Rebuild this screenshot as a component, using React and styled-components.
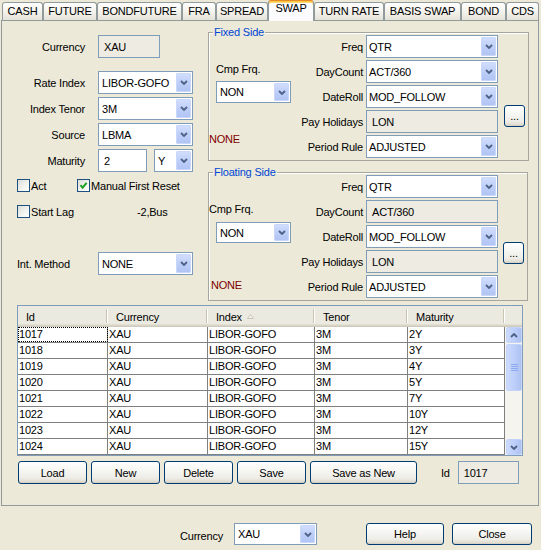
import React from 'react';
import styled, { createGlobalStyle, css } from 'styled-components';

const GlobalStyle = createGlobalStyle`
  html, body { margin: 0; padding: 0; background: #ECE9D8; }
  body {
    font-family: "Liberation Sans", Arial, sans-serif;
    font-size: 11px;
    letter-spacing: -0.2px;
    color: #000;
  }
  *, *::before, *::after { box-sizing: border-box; }
  button { font: inherit; letter-spacing: inherit; color: inherit; }
`;

const Window = styled.div`
  width: 541px;
  height: 550px;
  overflow: hidden;
  background: #ECE9D8;
  display: flex;
  flex-direction: column;
`;

/* ---------- tabs ---------- */
const TabBar = styled.div`
  position: relative;
  z-index: 1;
  display: flex;
  align-items: flex-end;
  height: 20px;
  padding-left: 2px;
  flex: none;
`;

const Tab = styled.div`
  flex: none;
  width: ${p => p.$w}px;
  border: 1px solid #919B9C;
  border-bottom: none;
  border-radius: 3px 3px 0 0;
  text-align: center;
  white-space: nowrap;
  ${p =>
    p.$active
      ? css`
          height: 21px;
          margin-bottom: -1px;
          border-top: 1px solid #E68B2C;
          box-shadow: inset 0 1px 0 #FFC73C, inset 0 2px 0 #FFD978;
          background: #FCFCFE;
          line-height: 15px;
        `
      : css`
          height: 18px;
          background: linear-gradient(180deg, #FFFFFF 0%, #F5F4EF 45%, #E5E3D8 100%);
          line-height: 17px;
        `}
`;

/* ---------- main panel ---------- */
const Panel = styled.div`
  flex: none;
  margin-left: 1px;
  width: 538px;
  height: 486px;
  border: 1px solid #919B9C;
  background: #ECE9D8;
  display: flex;
  flex-direction: column;
`;

const TopSection = styled.div`
  display: flex;
  height: 280px;
  flex: none;
`;

const LeftCol = styled.div`
  width: 206px;
  flex: none;
  padding-top: 14px;
  display: flex;
  flex-direction: column;
`;

const RightCol = styled.div`
  width: 321px;
  flex: none;
  padding-top: 11px;
  display: flex;
  flex-direction: column;
  gap: 11px;
`;

const FormRow = styled.div`
  display: grid;
  grid-template-columns: 83px 95px;
  column-gap: 13px;
  align-items: center;
  height: 23px;
  margin-top: ${p => p.$mt || 0}px;
`;

const RowLabel = styled.span`
  white-space: nowrap;
  text-align: ${p => (p.$left ? 'left' : 'right')};
  padding-left: ${p => (p.$left ? 15 : 0)}px;
`;

const Pair = styled.div`
  display: flex;
  gap: 7px;
`;

/* ---------- inputs ---------- */
const TextField = styled.div`
  flex: none;
  width: ${p => p.$w}px;
  height: ${p => p.$h || 23}px;
  border: 1px solid #7F9DB9;
  background: ${p => (p.$disabled ? '#EDEBE2' : '#FFFFFF')};
  padding-left: ${p => p.$pad ?? 5}px;
  display: flex;
  align-items: center;
  white-space: nowrap;
`;

const ComboBox = styled.div`
  flex: none;
  display: flex;
  align-items: stretch;
  width: ${p => p.$w}px;
  height: ${p => p.$h || 23}px;
  border: 1px solid #7F9DB9;
  background: #FFFFFF;
`;

const ComboText = styled.span`
  flex: 1;
  padding-left: ${p => p.$pad ?? 3}px;
  display: flex;
  align-items: center;
  white-space: nowrap;
  overflow: hidden;
`;

const ArrowBtn = styled.span`
  flex: none;
  width: 15px;
  margin: 1px;
  border-radius: 2px;
  background: linear-gradient(180deg, #D3DFFD 0%, #BCCDF8 55%, #AFC3F3 100%);
  box-shadow: inset 0 0 0 1px #C9D7FB;
  display: flex;
  align-items: center;
  justify-content: center;
`;

const Chevron = ({ up }) => (
  <svg width="8" height="5" viewBox="0 0 8 5">
    <path
      d={up ? 'M1 4 L4 1 L7 4' : 'M1 1 L4 4 L7 1'}
      stroke="#4D6185"
      strokeWidth="1.8"
      fill="none"
    />
  </svg>
);

const Combo = ({ w, h, pad, children }) => (
  <ComboBox $w={w} $h={h}>
    <ComboText $pad={pad}>{children}</ComboText>
    <ArrowBtn>
      <Chevron />
    </ArrowBtn>
  </ComboBox>
);

/* ---------- check boxes ---------- */
const CheckRow = styled.div`
  display: flex;
  align-items: center;
  height: 13px;
  margin-top: ${p => p.$mt}px;
  padding-left: 15px;
`;

const CheckItem = styled.div`
  display: flex;
  align-items: center;
  gap: 1px;
  width: ${p => (p.$w ? `${p.$w}px` : 'auto')};
  white-space: nowrap;
`;

const CheckBox = styled.span`
  flex: none;
  width: 13px;
  height: 13px;
  border: 1px solid #1C5180;
  background: linear-gradient(135deg, #DCDCD7 0%, #F4F4F1 60%, #FFFFFF 100%);
  display: flex;
  align-items: center;
  justify-content: center;
`;

const Check = ({ checked, label, w }) => (
  <CheckItem $w={w}>
    <CheckBox>
      {checked && (
        <svg width="9" height="9" viewBox="0 0 9 9">
          <polyline points="1.5,4.2 3.6,6.6 7.6,1.8" stroke="#21A121" strokeWidth="2" fill="none" />
        </svg>
      )}
    </CheckBox>
    <span>{label}</span>
  </CheckItem>
);

/* ---------- group boxes ---------- */
const GroupBox = styled.div`
  position: relative;
  flex: none;
  width: ${p => p.$w}px;
  height: 129px;
  border: 1px solid #A7A69E;
  box-shadow: inset 1px 1px 0 #FFFFFF;
  padding-top: 2px;
  display: flex;
`;

const GroupTitle = styled.span`
  position: absolute;
  top: -7px;
  left: 4px;
  padding: 0 1px;
  line-height: 13px;
  background: #ECE9D8;
  color: #0046D5;
  white-space: nowrap;
`;

const SideCol = styled.div`
  width: 86px;
  flex: none;
  display: flex;
  flex-direction: column;
  align-items: flex-start;
`;

const CmpLabel = styled.span`
  margin: 28px 0 0 ${p => p.$indent}px;
  line-height: 13px;
  white-space: nowrap;
`;

const SideCombo = styled.div`
  margin: ${p => p.$mt}px 0 0 7px;
`;

const NoneText = styled.span`
  margin: ${p => p.$mt}px 0 0 ${p => p.$indent}px;
  line-height: 13px;
  color: #800000;
`;

const FormGrid = styled.div`
  display: grid;
  grid-template-columns: 71px 132px;
  grid-auto-rows: 23px;
  row-gap: 2px;
  align-items: center;
  flex: none;
`;

const FormLabel = styled.span`
  text-align: right;
  padding-right: 3px;
  white-space: nowrap;
`;

const ButtonCol = styled.div`
  width: 27px;
  flex: none;
  display: flex;
  justify-content: flex-end;
  align-items: flex-start;
  padding-right: ${p => p.$pr}px;
  padding-top: ${p => p.$pt}px;
`;

/* ---------- buttons ---------- */
const Button = styled.button`
  flex: none;
  width: ${p => p.$w}px;
  height: ${p => p.$h || 23}px;
  padding: 0;
  border: 1px solid #003C74;
  border-radius: 3px;
  background: linear-gradient(180deg, #FFFFFF 0%, #F7F7F4 35%, #EEEDE7 75%, #DCD7CB 100%);
  box-shadow: inset 0 -1px 0 #D6D0C5;
  text-align: center;
  cursor: default;
`;

/* ---------- table ---------- */
const Table = styled.div`
  flex: none;
  width: 506px;
  height: 151px;
  margin: 4px 0 0 15px;
  border: 1px solid #7F9DB9;
  background: #FFFFFF;
  display: flex;
  flex-direction: column;
`;

const HeadRow = styled.div`
  flex: none;
  display: flex;
  height: 21px;
  background: #EBEAE0;
  box-shadow: inset 0 -1px 0 #CDCABB, inset 0 -2px 0 #D8D5C8, inset 0 -3px 0 #E2DFD3;
`;

const HeadCell = styled.div`
  position: relative;
  flex: none;
  width: ${p => p.$w}px;
  padding-left: 8px;
  line-height: 20px;
  white-space: nowrap;
  display: flex;
  align-items: center;
  gap: 5px;
  ${p =>
    !p.$plain &&
    css`
      &::after {
        content: '';
        position: absolute;
        right: 1px;
        top: 3px;
        bottom: 4px;
        width: 1px;
        background: #C7C5B2;
        box-shadow: 1px 0 0 #FFFFFF;
      }
    `}
`;

const Body = styled.div`
  flex: 1;
  display: flex;
`;

const Rows = styled.div`
  width: 487px;
  flex: none;
  display: flex;
  flex-direction: column;
`;

const Row = styled.div`
  display: flex;
  height: 16px;
  border-bottom: 1px solid #808080;
`;

const Cell = styled.div`
  flex: none;
  width: ${p => p.$w}px;
  border-right: 1px solid #808080;
  padding-left: 1px;
  line-height: 15px;
  white-space: nowrap;
  overflow: hidden;
  ${p =>
    p.$focus &&
    css`
      outline: 1px dotted #000;
      outline-offset: -1px;
    `}
`;

const ScrollBar = styled.div`
  width: 17px;
  flex: none;
  background: #F5F4EE;
  display: flex;
  flex-direction: column;
  padding-left: 1px;
`;

const ScrollBtn = styled.div`
  flex: none;
  height: ${p => p.$h}px;
  margin-top: ${p => p.$mt || 0}px;
  border: 1px solid #C4D3FA;
  border-radius: 2px;
  background: linear-gradient(90deg, #CBDAFD 0%, #BACCF8 60%, #AEC2F2 100%);
  display: flex;
  align-items: center;
  justify-content: center;
`;

const Spacer = styled.div`
  flex: 1;
`;

/* ---------- action + bottom rows ---------- */
const ActionRow = styled.div`
  display: flex;
  align-items: center;
  gap: 4px;
  height: 23px;
  margin: 5px 0 0 16px;
`;

const IdLabel = styled.span`
  margin: 0 4px 0 20px;
`;

const BottomBar = styled.div`
  flex: 1;
  display: flex;
  justify-content: flex-end;
  align-items: flex-start;
  padding: 17px 9px 0 0;
`;

const BottomLabel = styled.span`
  align-self: center;
  margin: 0 11px 2px 0;
`;

const BottomGap = styled.div`
  width: ${p => p.$w}px;
  flex: none;
`;

/* ---------- data ---------- */
const tabs = [
  ['CASH', 41],
  ['FUTURE', 54],
  ['BONDFUTURE', 85],
  ['FRA', 34],
  ['SPREAD', 52],
  ['SWAP', 46],
  ['TURN RATE', 70],
  ['BASIS SWAP', 77],
  ['BOND', 45],
  ['CDS', 33],
];

const columns = [
  ['Id', 90],
  ['Currency', 100],
  ['Index', 107, true],
  ['Tenor', 93],
  ['Maturity', 97],
];

const rows = [
  ['1017', '2Y'],
  ['1018', '3Y'],
  ['1019', '4Y'],
  ['1020', '5Y'],
  ['1021', '7Y'],
  ['1022', '10Y'],
  ['1023', '12Y'],
  ['1024', '15Y'],
];

const SortArrow = () => (
  <svg width="7" height="5" viewBox="0 0 7 5">
    <polygon points="0.5,4.5 3.5,0.5 6.5,4.5" fill="#F4F3EE" stroke="#C9C6B6" strokeWidth="1" />
  </svg>
);

const Grip = () => (
  <svg width="7" height="8" viewBox="0 0 7 8">
    {[0, 2, 4, 6].map(y => (
      <g key={y}>
        <rect x="0" y={y} width="7" height="1" fill="#8CAAF0" />
      </g>
    ))}
  </svg>
);

export default function App() {
  return (
    <Window>
      <GlobalStyle />
      <TabBar>
        {tabs.map(([t, w]) => (
          <Tab key={t} $w={w} $active={t === 'SWAP'}>
            {t}
          </Tab>
        ))}
      </TabBar>

      <Panel>
        <TopSection>
          <LeftCol>
            <FormRow>
              <RowLabel>Currency</RowLabel>
              <TextField $w={62} $disabled>XAU</TextField>
            </FormRow>
            <FormRow $mt={13}>
              <RowLabel>Rate Index</RowLabel>
              <Combo w={95}>LIBOR-GOFO</Combo>
            </FormRow>
            <FormRow $mt={3}>
              <RowLabel>Index Tenor</RowLabel>
              <Combo w={95}>3M</Combo>
            </FormRow>
            <FormRow $mt={3}>
              <RowLabel>Source</RowLabel>
              <Combo w={95}>LBMA</Combo>
            </FormRow>
            <FormRow $mt={3}>
              <RowLabel>Maturity</RowLabel>
              <Pair>
                <TextField $w={49}>2</TextField>
                <Combo w={39}>Y</Combo>
              </Pair>
            </FormRow>
            <CheckRow $mt={7}>
              <Check w={60} label="Act" />
              <Check checked label="Manual First Reset" />
            </CheckRow>
            <CheckRow $mt={13}>
              <Check w={120} label="Start Lag" />
              <span>-2,Bus</span>
            </CheckRow>
            <FormRow $mt={34}>
              <RowLabel $left>Int. Method</RowLabel>
              <Combo w={95}>NONE</Combo>
            </FormRow>
          </LeftCol>

          <RightCol>
            <GroupBox $w={321}>
              <GroupTitle>Fixed Side</GroupTitle>
              <SideCol>
                <CmpLabel $indent={7}>Cmp Frq.</CmpLabel>
                <SideCombo $mt={5}>
                  <Combo w={75} h={22}>NON</Combo>
                </SideCombo>
                <NoneText $mt={30} $indent={0}>NONE</NoneText>
              </SideCol>
              <FormGrid>
                <FormLabel>Freq</FormLabel>
                <Combo w={132} pad={2}>QTR</Combo>
                <FormLabel>DayCount</FormLabel>
                <Combo w={132} pad={2}>ACT/360</Combo>
                <FormLabel>DateRoll</FormLabel>
                <Combo w={132} pad={2}>MOD_FOLLOW</Combo>
                <FormLabel>Pay Holidays</FormLabel>
                <TextField $w={132} $disabled>LON</TextField>
                <FormLabel>Period Rule</FormLabel>
                <Combo w={132} pad={2}>ADJUSTED</Combo>
              </FormGrid>
              <ButtonCol $pt={70} $pr={0}>
                <Button $w={21} $h={22}>...</Button>
              </ButtonCol>
            </GroupBox>

            <GroupBox $w={320}>
              <GroupTitle>Floating Side</GroupTitle>
              <SideCol>
                <CmpLabel $indent={0}>Cmp Frq.</CmpLabel>
                <SideCombo $mt={6}>
                  <Combo w={75} h={21}>NON</Combo>
                </SideCombo>
                <NoneText $mt={36} $indent={2}>NONE</NoneText>
              </SideCol>
              <FormGrid>
                <FormLabel>Freq</FormLabel>
                <Combo w={132} pad={2}>QTR</Combo>
                <FormLabel>DayCount</FormLabel>
                <TextField $w={132} $disabled>ACT/360</TextField>
                <FormLabel>DateRoll</FormLabel>
                <Combo w={132} pad={2}>MOD_FOLLOW</Combo>
                <FormLabel>Pay Holidays</FormLabel>
                <TextField $w={132} $disabled>LON</TextField>
                <FormLabel>Period Rule</FormLabel>
                <Combo w={132} pad={2}>ADJUSTED</Combo>
              </FormGrid>
              <ButtonCol $pt={67} $pr={1}>
                <Button $w={21} $h={22}>...</Button>
              </ButtonCol>
            </GroupBox>
          </RightCol>
        </TopSection>

        <Table>
          <HeadRow>
            {columns.map(([name, w, sorted]) => (
              <HeadCell key={name} $w={w}>
                <span>{name}</span>
                {sorted && <SortArrow />}
              </HeadCell>
            ))}
            <HeadCell $w={17} $plain />
          </HeadRow>
          <Body>
            <Rows>
              {rows.map(([id, mat], i) => (
                <Row key={id}>
                  <Cell $w={90} $focus={i === 0}>{id}</Cell>
                  <Cell $w={100}>XAU</Cell>
                  <Cell $w={107}>LIBOR-GOFO</Cell>
                  <Cell $w={93}>3M</Cell>
                  <Cell $w={97}>{mat}</Cell>
                </Row>
              ))}
            </Rows>
            <ScrollBar>
              <ScrollBtn $h={16}>
                <Chevron up />
              </ScrollBtn>
              <ScrollBtn $h={47} $mt={1}>
                <Grip />
              </ScrollBtn>
              <Spacer />
              <ScrollBtn $h={16}>
                <Chevron />
              </ScrollBtn>
            </ScrollBar>
          </Body>
        </Table>

        <ActionRow>
          <Button $w={69}>Load</Button>
          <Button $w={69}>New</Button>
          <Button $w={69}>Delete</Button>
          <Button $w={69}>Save</Button>
          <Button $w={107}>Save as New</Button>
          <IdLabel>Id</IdLabel>
          <TextField $w={61} $disabled>1017</TextField>
        </ActionRow>
      </Panel>

      <BottomBar>
        <BottomLabel>Currency</BottomLabel>
        <Combo w={83} h={22}>XAU</Combo>
        <BottomGap $w={49} />
        <Button $w={78} $h={22}>Help</Button>
        <BottomGap $w={8} />
        <Button $w={80} $h={22}>Close</Button>
      </BottomBar>
    </Window>
  );
}
